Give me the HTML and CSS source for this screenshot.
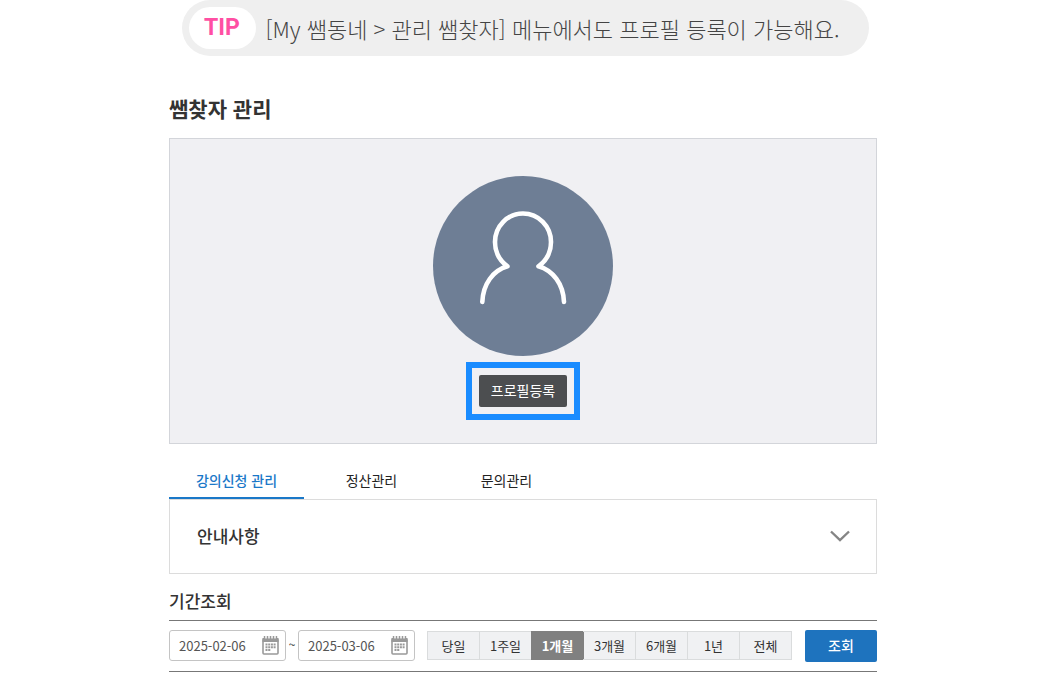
FILE: index.html
```html
<!DOCTYPE html>
<html lang="ko">
<head>
    <meta charset="UTF-8">
    <meta name="viewport" content="width=device-width, initial-scale=1.0">
    <title>쌤찾자 관리</title>
    <link rel="stylesheet" href="styles.css">
</head>
<body>
    <div class="tip-bar">
        <strong class="tip-label">TIP</strong>
        <p class="tip-text">[My 쌤동네 &gt; 관리 쌤찾자] 메뉴에서도 프로필 등록이 가능해요.</p>
    </div>

    <main class="container">
        <h1>쌤찾자 관리</h1>

        <section class="profile">
            <svg class="avatar" viewBox="0 0 180 180" aria-hidden="true">
                <circle cx="90" cy="90" r="90" fill="#6e7e95"/>
                <path d="M49.300 126C50 108 60 94.500 74.500 90.300C66.500 84.500 62 76 62 66A28 28.500 0 0 1 118 66C118 76 113.500 84.500 105.500 90.300C120 94.500 130.300 108 131 126" fill="none" stroke="#fff" stroke-width="4.600" stroke-linecap="round" stroke-linejoin="round"/>
            </svg>
            <div class="highlight">
                <button type="button" class="profile-btn">프로필등록</button>
            </div>
        </section>

        <nav class="tabs">
            <a href="#lecture" class="tab active">강의신청 관리</a>
            <a href="#settlement" class="tab">정산관리</a>
            <a href="#inquiry" class="tab">문의관리</a>
        </nav>

        <button type="button" class="notice" aria-expanded="false">
            <span>안내사항</span>
            <svg width="20" height="12" viewBox="0 0 20 12" aria-hidden="true">
                <path d="M1 1.500L10 10L19 1.500" fill="none" stroke="#858585" stroke-width="2.400"/>
            </svg>
        </button>

        <h2>기간조회</h2>
        <form class="filter">
            <div class="date-field">
                <input type="text" value="2025-02-06" aria-label="시작일">
                <button type="button" class="calendar-btn" aria-label="시작일 선택">
                    <svg width="17" height="19" viewBox="0 0 17 19">
                        <rect x="1" y="3" width="15" height="15" rx="1" fill="#fff" stroke="#999" stroke-width="1.600"/>
                        <path d="M0.500 2H16.500V6H0.500Z" fill="#999"/>
                        <path d="M2.500 0V4M5.500 0V4M8.500 0V4M11.500 0V4M14.500 0V4" stroke="#999" stroke-width="1.400"/>
                        <path d="M4 0V3M7 0V3M10 0V3M13 0V3" stroke="#ddd"/>
                        <path d="M3.500 8.500H14M3.500 11.300H14M3.500 14.100H9" stroke="#999" stroke-width="2" stroke-dasharray="2 0.700"/>
                    </svg>
                </button>
            </div>
            <span class="tilde">~</span>
            <div class="date-field">
                <input type="text" value="2025-03-06" aria-label="종료일">
                <button type="button" class="calendar-btn" aria-label="종료일 선택">
                    <svg width="17" height="19" viewBox="0 0 17 19">
                        <rect x="1" y="3" width="15" height="15" rx="1" fill="#fff" stroke="#999" stroke-width="1.600"/>
                        <path d="M0.500 2H16.500V6H0.500Z" fill="#999"/>
                        <path d="M2.500 0V4M5.500 0V4M8.500 0V4M11.500 0V4M14.500 0V4" stroke="#999" stroke-width="1.400"/>
                        <path d="M4 0V3M7 0V3M10 0V3M13 0V3" stroke="#ddd"/>
                        <path d="M3.500 8.500H14M3.500 11.300H14M3.500 14.100H9" stroke="#999" stroke-width="2" stroke-dasharray="2 0.700"/>
                    </svg>
                </button>
            </div>
            <div class="periods">
                <button type="button">당일</button>
                <button type="button">1주일</button>
                <button type="button" class="active">1개월</button>
                <button type="button">3개월</button>
                <button type="button">6개월</button>
                <button type="button">1년</button>
                <button type="button">전체</button>
            </div>
            <button type="submit" class="search-btn">조회</button>
        </form>
    </main>
</body>
</html>
```

FILE: styles.css
```css
* {
    box-sizing: border-box;
}

body {
    margin: 0;
    background-color: #fff;
    color: #333;
    font-family: "Noto Sans CJK KR", sans-serif;
    font-size: 14px;
}

button,
input {
    margin: 0;
    padding: 0;
    font-family: inherit;
    color: inherit;
}

button {
    border-radius: 0;
    cursor: pointer;
}

/* 상단 안내 */
.tip-bar {
    display: flex;
    align-items: center;
    gap: 10px;
    max-width: 687px;
    margin: 0 auto;
    padding: 7px;
    border-radius: 28px;
    background-color: #efefef;
}

.tip-label {
    width: 67px;
    border-radius: 21px;
    background-color: #fff;
    color: #ff4fa3;
    font-family: Roboto, sans-serif;
    font-size: 23px;
    line-height: 42px;
    text-align: center;
}

.tip-text {
    margin: 0;
    color: #444;
    font-size: 22px;
    font-weight: 300;
    line-height: 40px;
}

.container {
    max-width: 712px;
    margin: 0 auto;
    padding: 36px 4px 20px 0;
}

h1 {
    margin: 0 0 14px;
    font-size: 21px;
    line-height: 32px;
}

/* 프로필 */
.profile {
    display: flex;
    flex-direction: column;
    align-items: center;
    gap: 6px;
    padding: 37px 20px 23px;
    border: 1px solid #d3d5da;
    background-color: #f0f0f3;
}

.avatar {
    width: 180px;
    height: 180px;
}

.highlight {
    padding: 7px;
    border: 6px solid #1a8cff;
}

.profile-btn {
    display: block;
    width: 88px;
    height: 32px;
    padding-bottom: 2px;
    border: 0;
    border-radius: 2px;
    background-color: #4c4e50;
    color: #fff;
    font-size: 14px;
}

/* 탭 */
.tabs {
    display: flex;
    margin-top: 20px;
}

.tab {
    width: 135px;
    border-bottom: 2px solid transparent;
    color: #222;
    line-height: 33px;
    text-align: center;
    text-decoration: none;
}

.tab.active {
    border-color: #1a78c8;
    color: #1a78c8;
    font-weight: 500;
}

.notice {
    display: flex;
    justify-content: space-between;
    align-items: center;
    width: 100%;
    padding: 23px 26px 25px 27px;
    border: 1px solid #dcdcdc;
    background-color: #fff;
    font-size: 17px;
    font-weight: 500;
    line-height: 25px;
}

h2 {
    margin: 14px 0 6px;
    font-size: 17px;
    font-weight: 500;
    line-height: 26px;
}

/* 기간 검색 */
.filter {
    display: flex;
    align-items: flex-start;
    padding: 9px 0;
    border-top: 1px solid #777;
    border-bottom: 1px solid #777;
}

.date-field {
    display: flex;
    align-items: center;
    width: 117px;
    height: 31px;
    padding: 0 6px 0 9px;
    border: 1px solid #c4c4c4;
    border-radius: 3px;
}

.date-field input {
    flex: 1;
    min-width: 0;
    border: 0;
    background: none;
    color: #555;
    font-size: 13px;
}

.calendar-btn {
    border: 0;
    background: none;
}

.calendar-btn svg {
    display: block;
}

.tilde {
    width: 12px;
    font-size: 12px;
    line-height: 28px;
    text-align: center;
}

.periods {
    display: flex;
    flex: 1;
    margin: 1px 13px 0 12px;
    border: 1px solid #dadcdd;
    background-color: #f0f1f3;
}

.periods button {
    flex: 1;
    border: 0;
    background: none;
    font-size: 13px;
    line-height: 27px;
}

.periods button + button {
    border-left: 1px solid #dadcdd;
}

.periods button.active {
    margin: -1px 0;
    border-left-color: #808080;
    background-color: #808080;
    color: #fff;
    font-weight: bold;
}

.periods button.active + button {
    border-left-color: #808080;
}

.search-btn {
    width: 72px;
    height: 32px;
    padding-bottom: 2px;
    border: 0;
    border-radius: 2px;
    background-color: #1e73be;
    color: #fff;
    font-size: 14px;
    font-weight: 500;
}
```
